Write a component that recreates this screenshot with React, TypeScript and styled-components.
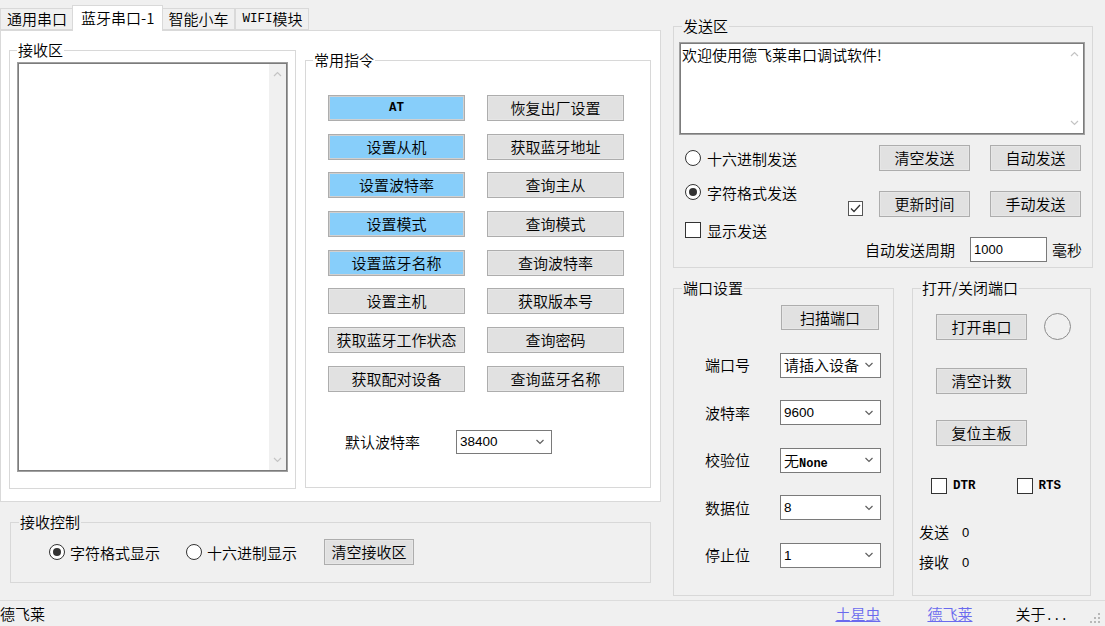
import React from "react";
import styled, { createGlobalStyle } from "styled-components";

const CJK = `"Noto Sans CJK SC", "Noto Sans", sans-serif`;
const MONO = `"Liberation Mono", "DejaVu Sans Mono", monospace`;
const SANS = `"Liberation Sans", Arial, sans-serif`;

const GlobalStyle = createGlobalStyle`
  html, body { margin: 0; padding: 0; background: #f0f0f0; }
  body { font-family: ${CJK}; font-size: 15px; font-weight: 350; color: #000; }
  * { box-sizing: border-box; }
`;

const Window = styled.div`
  width: 1105px;
  height: 626px;
  display: flex;
  flex-direction: column;
  overflow: hidden;
  background: #f0f0f0;
`;

const Main = styled.div`
  height: 600px;
  display: flex;
  align-items: flex-start;
`;

const LeftColumn = styled.div`
  width: 662px;
  display: flex;
  flex-direction: column;
`;

const RightColumn = styled.div`
  margin-left: 11px;
  padding-top: 18px;
  display: flex;
  flex-direction: column;
`;

/* ---------- tabs ---------- */
const TabStrip = styled.div`
  height: 30px;
  display: flex;
  align-items: flex-end;
`;

const Tab = styled.div<{ $active?: boolean }>`
  position: relative;
  z-index: ${(p) => (p.$active ? 2 : 1)};
  height: ${(p) => (p.$active ? 26 : 22)}px;
  margin: ${(p) => (p.$active ? "0 -2px -1px" : "0")};
  padding: ${(p) => (p.$active ? "0 8px 2px" : "0 6px")};
  background: ${(p) => (p.$active ? "#fff" : "#f0f0f0")};
  border: 1px solid #d9d9d9;
  border-bottom: ${(p) => (p.$active ? "none" : "1px solid #d9d9d9")};
  display: flex;
  align-items: center;
  font-size: 15px;
  line-height: 16px;
  white-space: nowrap;
`;

const Latin = styled.span<{ $size?: number; $bold?: boolean }>`
  font-family: ${MONO};
  font-weight: ${(p) => (p.$bold === false ? "normal" : "bold")};
  font-size: ${(p) => p.$size ?? 12.5}px;
`;

const TabPage = styled.div`
  width: 661px;
  height: 472px;
  background: #fff;
  border: 1px solid #d9d9d9;
  display: flex;
  align-items: flex-start;
  gap: 9px;
  padding: 11px 0 0 8px;
`;

/* ---------- group box ---------- */
const Group = styled.fieldset<{ $w: number; $h: number; $mt?: number; $ml?: number }>`
  margin: ${(p) => p.$mt ?? 0}px 0 0 ${(p) => p.$ml ?? 0}px;
  padding: 0;
  min-width: 0;
  width: ${(p) => p.$w}px;
  height: ${(p) => p.$h}px;
  border: 1px solid #d8d8d8;
  flex-shrink: 0;
`;

const Legend = styled.legend<{ $ml?: number }>`
  margin-left: ${(p) => p.$ml ?? 7}px;
  padding: 0 1px;
  font-size: 15px;
  line-height: 16px;
  height: 16px;
`;

/* ---------- text box with disabled scrollbar ---------- */
const TextBox = styled.div<{ $w: number; $h: number }>`
  width: ${(p) => p.$w}px;
  height: ${(p) => p.$h}px;
  background: #fff;
  border: 1px solid #a0a0a0;
  box-shadow: inset 0 0 0 1px #7c7c7c;
  padding: 1px;
  display: flex;
`;

const TextContent = styled.div`
  flex: 1;
  padding: 1px 1px;
  font-size: 15px;
  line-height: 20px;
  white-space: nowrap;
`;

const ScrollTrack = styled.div<{ $bg: string }>`
  width: 17px;
  background: ${(p) => p.$bg};
  display: flex;
  flex-direction: column;
  justify-content: space-between;
  align-items: center;
  padding: 7px 0;
`;

const Chevron = ({ up, color = "#c4c4c4", w = 9 }: { up?: boolean; color?: string; w?: number }) => (
  <svg width={w} height={6} viewBox="0 0 9 6">
    <path
      d={up ? "M1 5 L4.5 1.5 L8 5" : "M1 1 L4.5 4.5 L8 1"}
      fill="none"
      stroke={color}
      strokeWidth="1.2"
    />
  </svg>
);

/* ---------- buttons ---------- */
const Btn = styled.button<{ $blue?: boolean; $w?: number; $h?: number }>`
  width: ${(p) => p.$w ?? 91}px;
  height: ${(p) => p.$h ?? 26}px;
  margin: 0;
  padding: 0;
  flex-shrink: 0;
  font-family: ${CJK};
  font-size: 15px;
  font-weight: 350;
  line-height: 16px;
  color: #000;
  background: ${(p) => (p.$blue ? "#87cefa" : "#e1e1e1")};
  border: 1px solid #adadad;
  box-shadow: inset 0 0 0 1px ${(p) => (p.$blue ? "#d0d0d0" : "#e6e6e6")};
  display: flex;
  align-items: center;
  justify-content: center;
  white-space: nowrap;
`;

/* ---------- combo / input ---------- */
const Combo = styled.div<{ $w: number; $h?: number }>`
  width: ${(p) => p.$w}px;
  height: ${(p) => p.$h ?? 25}px;
  background: #fff;
  border: 1px solid #7a7a7a;
  display: flex;
  align-items: center;
  justify-content: space-between;
  padding: 0 6px 0 3px;
  white-space: nowrap;
`;

const Num = styled.span<{ $size?: number }>`
  font-family: ${SANS};
  font-weight: normal;
  font-size: ${(p) => p.$size ?? 13.5}px;
`;

const Field = styled.div<{ $w: number }>`
  width: ${(p) => p.$w}px;
  height: 25px;
  background: #fff;
  border: 1px solid #7a7a7a;
  display: flex;
  align-items: center;
  padding-left: 3px;
`;

/* ---------- radio / checkbox ---------- */
const Option = styled.div<{ $mt?: number; $gap?: number }>`
  margin-top: ${(p) => p.$mt ?? 0}px;
  height: 20px;
  display: flex;
  align-items: center;
  gap: ${(p) => p.$gap ?? 6}px;
  white-space: nowrap;
  font-size: 15px;
`;

const RadioMark = styled.span<{ $checked?: boolean }>`
  width: 16px;
  height: 16px;
  border-radius: 50%;
  border: 1px solid #333;
  background: #fff;
  display: inline-flex;
  align-items: center;
  justify-content: center;
  flex-shrink: 0;
  &::after {
    content: "";
    width: 8px;
    height: 8px;
    border-radius: 50%;
    background: ${(p) => (p.$checked ? "#333" : "transparent")};
  }
`;

const CheckMark = styled.span<{ $size?: number; $border?: string }>`
  width: ${(p) => p.$size ?? 16}px;
  height: ${(p) => p.$size ?? 16}px;
  border: 1px solid ${(p) => p.$border ?? "#333"};
  background: #fff;
  display: inline-flex;
  align-items: center;
  justify-content: center;
  flex-shrink: 0;
`;

const Tick = () => (
  <svg width="11" height="9" viewBox="0 0 11 9">
    <path d="M1 4.5 L4 7.5 L10 1" fill="none" stroke="#333" strokeWidth="1.3" />
  </svg>
);

/* ---------- commands group ---------- */
const CmdBody = styled.div`
  padding: 27px 0 0 22px;
`;

const CmdGrid = styled.div`
  display: grid;
  grid-template-columns: 137px 137px;
  grid-auto-rows: 26px;
  column-gap: 22px;
  row-gap: 12.7px;
`;

const BaudRow = styled.div`
  margin-top: 38px;
  padding-left: 17px;
  display: flex;
  align-items: center;
  gap: 36px;
`;

const Label = styled.span`
  font-size: 15px;
  line-height: 16px;
  white-space: nowrap;
`;

const RecvBody = styled.div`
  padding: 4px 0 0 7px;
`;

const RecvCtrlBody = styled.div`
  padding: 9px 0 0 38px;
  height: 35px;
  display: flex;
  align-items: center;
`;

const CtrlSpacer = styled.div<{ $w: number }>`
  width: ${(p) => p.$w}px;
  flex-shrink: 0;
`;

/* ---------- send group ---------- */
const SendBody = styled.div`
  padding: 8px 0 0 5px;
`;

const SendControls = styled.div`
  display: flex;
  justify-content: space-between;
  padding: 0 11px 0 6px;
`;

const OptionStack = styled.div`
  display: flex;
  flex-direction: column;
`;

const SendGrid = styled.div`
  margin-top: 10px;
  display: grid;
  grid-template-columns: 31px 91px 20px 91px;
  grid-template-rows: 25px 25px 25px;
  row-gap: 21px;
`;

const GridCell = styled.div<{ $col: string; $align?: string }>`
  grid-column: ${(p) => p.$col};
  align-self: ${(p) => p.$align ?? "stretch"};
  display: flex;
  align-items: center;
`;

const PeriodRow = styled.div`
  grid-column: 1 / -1;
  display: flex;
  justify-content: flex-end;
  align-items: center;
  margin-right: -1px;
`;

const BottomRow = styled.div`
  margin-top: 12px;
  display: flex;
  gap: 18px;
`;

/* ---------- port group ---------- */
const PortGrid = styled.div`
  padding: 9px 0 0 31px;
  display: grid;
  grid-template-columns: 75px 101px;
  grid-auto-rows: 25px;
  row-gap: 22.6px;
  align-items: center;
`;

const PortBtnCell = styled.div`
  grid-column: 2;
  padding-left: 1px;
`;

/* ---------- open/close group ---------- */
const OpenBody = styled.div`
  padding-top: 17px;
  display: flex;
  flex-direction: column;
`;

const OpenRow = styled.div<{ $mt?: number; $ml?: number; $gap?: number }>`
  margin-top: ${(p) => p.$mt ?? 0}px;
  margin-left: ${(p) => p.$ml ?? 0}px;
  display: flex;
  align-items: center;
  gap: ${(p) => p.$gap ?? 0}px;
  white-space: nowrap;
`;

const Lamp = styled.span`
  width: 27px;
  height: 27px;
  border-radius: 50%;
  border: 1.5px solid #8c8c8c;
  flex-shrink: 0;
`;

const Counter = styled.div<{ $mt: number }>`
  margin-top: ${(p) => p.$mt}px;
  margin-left: 6px;
  height: 20px;
  display: flex;
  align-items: center;
  gap: 13px;
`;

/* ---------- status bar ---------- */
const StatusBar = styled.div`
  height: 26px;
  border-top: 1px solid #dcdcdc;
  display: flex;
  align-items: center;
  font-size: 15px;
`;

const StatusText = styled.span`
  flex: 1;
  white-space: nowrap;
`;

const StatusLink = styled.span<{ $mr: number }>`
  color: #6a6aee;
  text-decoration: underline;
  margin-right: ${(p) => p.$mr}px;
  white-space: nowrap;
`;

const StatusPlain = styled.span`
  margin-right: 21px;
  white-space: nowrap;
`;

const Grip = () => (
  <svg width="12" height="12" viewBox="0 0 12 12" style={{ marginRight: 4, marginTop: 8 }}>
    {[
      [9, 1],
      [9, 5],
      [5, 5],
      [9, 9],
      [5, 9],
      [1, 9],
    ].map(([x, y], i) => (
      <rect key={i} x={x} y={y} width="2" height="2" fill="#b8b8b8" />
    ))}
  </svg>
);

const commands: { label: React.ReactNode; blue?: boolean }[] = [
  { label: <Latin>AT</Latin>, blue: true },
  { label: "恢复出厂设置" },
  { label: "设置从机", blue: true },
  { label: "获取蓝牙地址" },
  { label: "设置波特率", blue: true },
  { label: "查询主从" },
  { label: "设置模式", blue: true },
  { label: "查询模式" },
  { label: "设置蓝牙名称", blue: true },
  { label: "查询波特率" },
  { label: "设置主机" },
  { label: "获取版本号" },
  { label: "获取蓝牙工作状态" },
  { label: "查询密码" },
  { label: "获取配对设备" },
  { label: "查询蓝牙名称" },
];

const portRows: { label: string; value: React.ReactNode }[] = [
  { label: "端口号", value: <Label>请插入设备</Label> },
  { label: "波特率", value: <Num>9600</Num> },
  {
    label: "校验位",
    value: (
      <span>
        <Label>无</Label>
        <Latin $size={12}>None</Latin>
      </span>
    ),
  },
  { label: "数据位", value: <Num>8</Num> },
  { label: "停止位", value: <Num>1</Num> },
];

export default function App() {
  return (
    <>
      <GlobalStyle />
      <Window>
        <Main>
          <LeftColumn>
            <TabStrip>
              <Tab>通用串口</Tab>
              <Tab $active>蓝牙串口-1</Tab>
              <Tab>智能小车</Tab>
              <Tab>
                <Latin $bold={false}>WIFI</Latin>模块
              </Tab>
            </TabStrip>
            <TabPage>
              <Group $w={287} $h={447}>
                <Legend $ml={7}>接收区</Legend>
                <RecvBody>
                  <TextBox $w={271} $h={410}>
                    <TextContent />
                    <ScrollTrack $bg="#f0f0f0">
                      <Chevron up />
                      <Chevron />
                    </ScrollTrack>
                  </TextBox>
                </RecvBody>
              </Group>
              <Group $w={346} $h={436} $mt={10}>
                <Legend $ml={7}>常用指令</Legend>
                <CmdBody>
                  <CmdGrid>
                    {commands.map((c, i) => (
                      <Btn key={i} $blue={c.blue} $w={137} $h={26}>
                        {c.label}
                      </Btn>
                    ))}
                  </CmdGrid>
                  <BaudRow>
                    <Label>默认波特率</Label>
                    <Combo $w={96} $h={24}>
                      <Num>38400</Num>
                      <Chevron color="#606060" w={10} />
                    </Combo>
                  </BaudRow>
                </CmdBody>
              </Group>
            </TabPage>
            <Group $w={641} $h={69} $mt={12} $ml={10}>
              <Legend $ml={8}>接收控制</Legend>
              <RecvCtrlBody>
                <Option $gap={5}>
                  <RadioMark $checked />
                  字符格式显示
                </Option>
                <CtrlSpacer $w={26} />
                <Option $gap={5}>
                  <RadioMark />
                  十六进制显示
                </Option>
                <CtrlSpacer $w={27} />
                <Btn $w={90} $h={26}>
                  清空接收区
                </Btn>
              </RecvCtrlBody>
            </Group>
          </LeftColumn>

          <RightColumn>
            <Group $w={420} $h={250}>
              <Legend $ml={8}>发送区</Legend>
              <SendBody>
                <TextBox $w={406} $h={93}>
                  <TextContent>欢迎使用德飞莱串口调试软件!</TextContent>
                  <ScrollTrack $bg="#fff">
                    <Chevron up />
                    <Chevron />
                  </ScrollTrack>
                </TextBox>
                <SendControls>
                  <OptionStack>
                    <Option $mt={13}>
                      <RadioMark />
                      十六进制发送
                    </Option>
                    <Option $mt={14}>
                      <RadioMark $checked />
                      字符格式发送
                    </Option>
                    <Option $mt={18}>
                      <CheckMark />
                      显示发送
                    </Option>
                  </OptionStack>
                  <SendGrid>
                    <GridCell $col="2">
                      <Btn>清空发送</Btn>
                    </GridCell>
                    <GridCell $col="4">
                      <Btn>自动发送</Btn>
                    </GridCell>
                    <GridCell $col="1" $align="end">
                      <CheckMark $size={15} $border="#555">
                        <Tick />
                      </CheckMark>
                    </GridCell>
                    <GridCell $col="2">
                      <Btn>更新时间</Btn>
                    </GridCell>
                    <GridCell $col="4">
                      <Btn>手动发送</Btn>
                    </GridCell>
                    <PeriodRow>
                      <Label>自动发送周期</Label>
                      <CtrlSpacer $w={15} />
                      <Field $w={77}>
                        <Num $size={13}>1000</Num>
                      </Field>
                      <CtrlSpacer $w={5} />
                      <Label>毫秒</Label>
                    </PeriodRow>
                  </SendGrid>
                </SendControls>
              </SendBody>
            </Group>

            <BottomRow>
              <Group $w={221} $h={316}>
                <Legend $ml={8}>端口设置</Legend>
                <PortGrid>
                  <PortBtnCell>
                    <Btn $w={98} $h={25}>
                      扫描端口
                    </Btn>
                  </PortBtnCell>
                  {portRows.map((r) => (
                    <React.Fragment key={r.label}>
                      <Label>{r.label}</Label>
                      <Combo $w={101}>
                        {r.value}
                        <Chevron color="#606060" w={10} />
                      </Combo>
                    </React.Fragment>
                  ))}
                </PortGrid>
              </Group>

              <Group $w={179} $h={316}>
                <Legend $ml={8}>打开/关闭端口</Legend>
                <OpenBody>
                  <OpenRow $ml={23} $gap={17}>
                    <Btn>打开串口</Btn>
                    <Lamp />
                  </OpenRow>
                  <OpenRow $ml={23} $mt={28}>
                    <Btn>清空计数</Btn>
                  </OpenRow>
                  <OpenRow $ml={23} $mt={26}>
                    <Btn>复位主板</Btn>
                  </OpenRow>
                  <OpenRow $ml={18} $mt={30}>
                    <Option>
                      <CheckMark />
                      <Latin>DTR</Latin>
                    </Option>
                    <CtrlSpacer $w={41} />
                    <Option>
                      <CheckMark />
                      <Latin>RTS</Latin>
                    </Option>
                  </OpenRow>
                  <Counter $mt={26}>
                    <Label>发送</Label>
                    <Num $size={13}>0</Num>
                  </Counter>
                  <Counter $mt={10}>
                    <Label>接收</Label>
                    <Num $size={13}>0</Num>
                  </Counter>
                </OpenBody>
              </Group>
            </BottomRow>
          </RightColumn>
        </Main>

        <StatusBar>
          <StatusText>德飞莱</StatusText>
          <StatusLink $mr={47}>土星虫</StatusLink>
          <StatusLink $mr={43}>德飞莱</StatusLink>
          <StatusPlain>
            关于<Latin $size={12.5} $bold={false}>...</Latin>
          </StatusPlain>
          <Grip />
        </StatusBar>
      </Window>
    </>
  );
}
